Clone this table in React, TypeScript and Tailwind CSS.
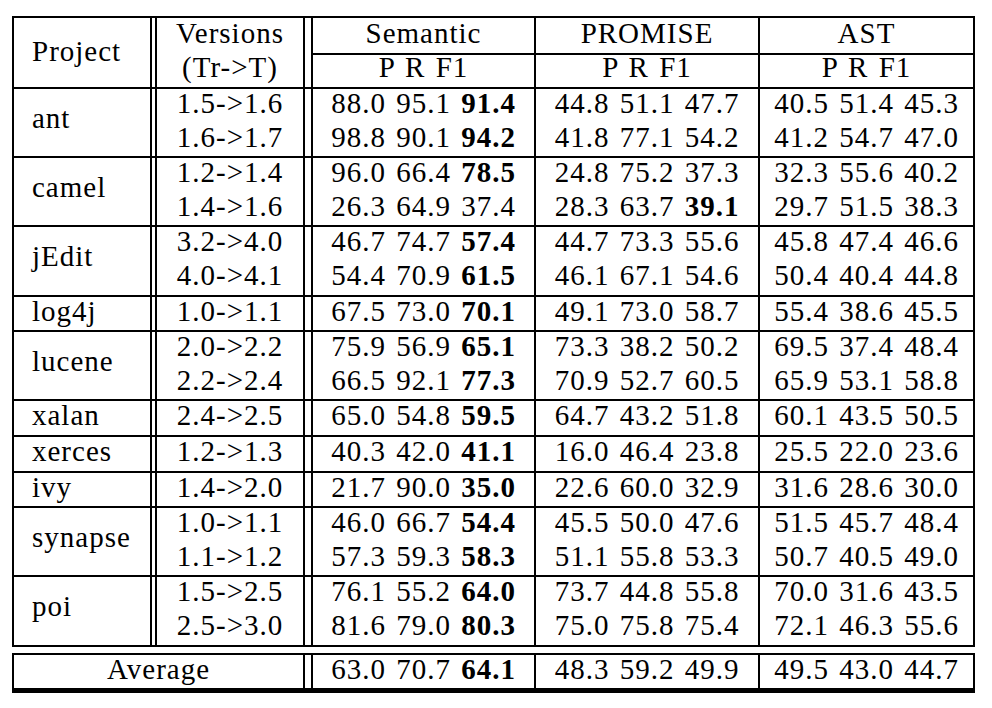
type Row = { v: string; s: string; p: string; a: string; b?: 's' | 'p' };
type Group = { name: string; rows: Row[] };

const groups: Group[] = [
    {
        name: 'ant',
        rows: [
            { v: '1.5->1.6', s: '88.0 95.1 91.4', p: '44.8 51.1 47.7', a: '40.5 51.4 45.3', b: 's' },
            { v: '1.6->1.7', s: '98.8 90.1 94.2', p: '41.8 77.1 54.2', a: '41.2 54.7 47.0', b: 's' },
        ],
    },
    {
        name: 'camel',
        rows: [
            { v: '1.2->1.4', s: '96.0 66.4 78.5', p: '24.8 75.2 37.3', a: '32.3 55.6 40.2', b: 's' },
            { v: '1.4->1.6', s: '26.3 64.9 37.4', p: '28.3 63.7 39.1', a: '29.7 51.5 38.3', b: 'p' },
        ],
    },
    {
        name: 'jEdit',
        rows: [
            { v: '3.2->4.0', s: '46.7 74.7 57.4', p: '44.7 73.3 55.6', a: '45.8 47.4 46.6', b: 's' },
            { v: '4.0->4.1', s: '54.4 70.9 61.5', p: '46.1 67.1 54.6', a: '50.4 40.4 44.8', b: 's' },
        ],
    },
    { name: 'log4j', rows: [{ v: '1.0->1.1', s: '67.5 73.0 70.1', p: '49.1 73.0 58.7', a: '55.4 38.6 45.5', b: 's' }] },
    {
        name: 'lucene',
        rows: [
            { v: '2.0->2.2', s: '75.9 56.9 65.1', p: '73.3 38.2 50.2', a: '69.5 37.4 48.4', b: 's' },
            { v: '2.2->2.4', s: '66.5 92.1 77.3', p: '70.9 52.7 60.5', a: '65.9 53.1 58.8', b: 's' },
        ],
    },
    { name: 'xalan', rows: [{ v: '2.4->2.5', s: '65.0 54.8 59.5', p: '64.7 43.2 51.8', a: '60.1 43.5 50.5', b: 's' }] },
    { name: 'xerces', rows: [{ v: '1.2->1.3', s: '40.3 42.0 41.1', p: '16.0 46.4 23.8', a: '25.5 22.0 23.6', b: 's' }] },
    { name: 'ivy', rows: [{ v: '1.4->2.0', s: '21.7 90.0 35.0', p: '22.6 60.0 32.9', a: '31.6 28.6 30.0', b: 's' }] },
    {
        name: 'synapse',
        rows: [
            { v: '1.0->1.1', s: '46.0 66.7 54.4', p: '45.5 50.0 47.6', a: '51.5 45.7 48.4', b: 's' },
            { v: '1.1->1.2', s: '57.3 59.3 58.3', p: '51.1 55.8 53.3', a: '50.7 40.5 49.0', b: 's' },
        ],
    },
    {
        name: 'poi',
        rows: [
            { v: '1.5->2.5', s: '76.1 55.2 64.0', p: '73.7 44.8 55.8', a: '70.0 31.6 43.5', b: 's' },
            { v: '2.5->3.0', s: '81.6 79.0 80.3', p: '75.0 75.8 75.4', a: '72.1 46.3 55.6', b: 's' },
        ],
    },
];

const average: Row = { v: '', s: '63.0 70.7 64.1', p: '48.3 59.2 49.9', a: '49.5 43.0 44.7', b: 's' };

// P R F1 triple, last value bold when it is the best one
function Triple({ text, bold }: { text: string; bold: boolean }) {
    const [p, r, f] = text.split(' ');
    return (
        <>
            {p} {r} {bold ? <span className="font-bold">{f}</span> : f}
        </>
    );
}

function Cell({ children }: { children: React.ReactNode }) {
    return <div className="h-[33.6px] pt-[1px] leading-[26px] text-center whitespace-nowrap">{children}</div>;
}

function DoubleA() {
    return <div className="w-[7px] shrink-0 border-x-2 border-black" />;
}

function DoubleB() {
    return <div className="w-[10px] shrink-0 border-x-2 border-black" />;
}

export default function App() {
    return (
        <div className="min-h-screen bg-white text-black font-['Liberation_Serif',serif] text-[29px] tracking-[1px] [word-spacing:2px]">
            <div className="ml-[12px] pt-[16px] w-[963px]">
                {/* main table */}
                <div className="border-2 border-black">
                    {/* header */}
                    <div className="flex h-[69px]">
                        <div className="w-[136px] shrink-0 pl-[18px] pb-[4px] flex items-center leading-[26px]">Project</div>
                        <DoubleA />
                        <div className="w-[146px] shrink-0 text-center">
                            <div className="h-[37px] pt-[2px] leading-[26px]">Versions</div>
                            <div className="h-[32px] leading-[24px]">(Tr-&gt;T)</div>
                        </div>
                        <DoubleB />
                        {[
                            { t: 'Semantic', w: 'w-[221px]' },
                            { t: 'PROMISE', w: 'w-[224px] border-l-2 border-black' },
                            { t: 'AST', w: 'w-[215px] border-l-2 border-black' },
                        ].map((h) => (
                            <div key={h.t} className={`${h.w} shrink-0 text-center`}>
                                <div className="h-[37px] pt-[2px] leading-[26px] border-b-2 border-black">{h.t}</div>
                                <div className="h-[32px] leading-[24px]">P R F1</div>
                            </div>
                        ))}
                    </div>

                    {/* project groups */}
                    {groups.map((g) => (
                        <div key={g.name} className="flex border-t-2 border-black">
                            <div
                                className={
                                    g.rows.length > 1
                                        ? 'w-[136px] shrink-0 pl-[18px] pb-[9px] flex items-center leading-[26px]'
                                        : 'w-[136px] shrink-0 pl-[18px] pt-[1px] leading-[26px]'
                                }
                            >
                                {g.name}
                            </div>
                            <DoubleA />
                            <div className="w-[146px] shrink-0">
                                {g.rows.map((r) => (
                                    <Cell key={r.v}>{r.v}</Cell>
                                ))}
                            </div>
                            <DoubleB />
                            <div className="w-[221px] shrink-0">
                                {g.rows.map((r) => (
                                    <Cell key={r.v}>
                                        <Triple text={r.s} bold={r.b === 's'} />
                                    </Cell>
                                ))}
                            </div>
                            <div className="w-[224px] shrink-0 border-l-2 border-black">
                                {g.rows.map((r) => (
                                    <Cell key={r.v}>
                                        <Triple text={r.p} bold={r.b === 'p'} />
                                    </Cell>
                                ))}
                            </div>
                            <div className="w-[215px] shrink-0 border-l-2 border-black">
                                {g.rows.map((r) => (
                                    <Cell key={r.v}>
                                        <Triple text={r.a} bold={false} />
                                    </Cell>
                                ))}
                            </div>
                        </div>
                    ))}
                </div>

                {/* average */}
                <div className="mt-[6px] flex h-[40px] border-x-2 border-t-2 border-b-[5px] border-black">
                    <div className="w-[289px] shrink-0 pt-[1px] leading-[26px] text-center">Average</div>
                    <DoubleB />
                    <div className="w-[221px] shrink-0 pt-[1px] leading-[26px] text-center">
                        <Triple text={average.s} bold />
                    </div>
                    <div className="w-[224px] shrink-0 border-l-2 border-black pt-[1px] leading-[26px] text-center">
                        <Triple text={average.p} bold={false} />
                    </div>
                    <div className="w-[215px] shrink-0 border-l-2 border-black pt-[1px] leading-[26px] text-center">
                        <Triple text={average.a} bold={false} />
                    </div>
                </div>
            </div>
        </div>
    );
}
